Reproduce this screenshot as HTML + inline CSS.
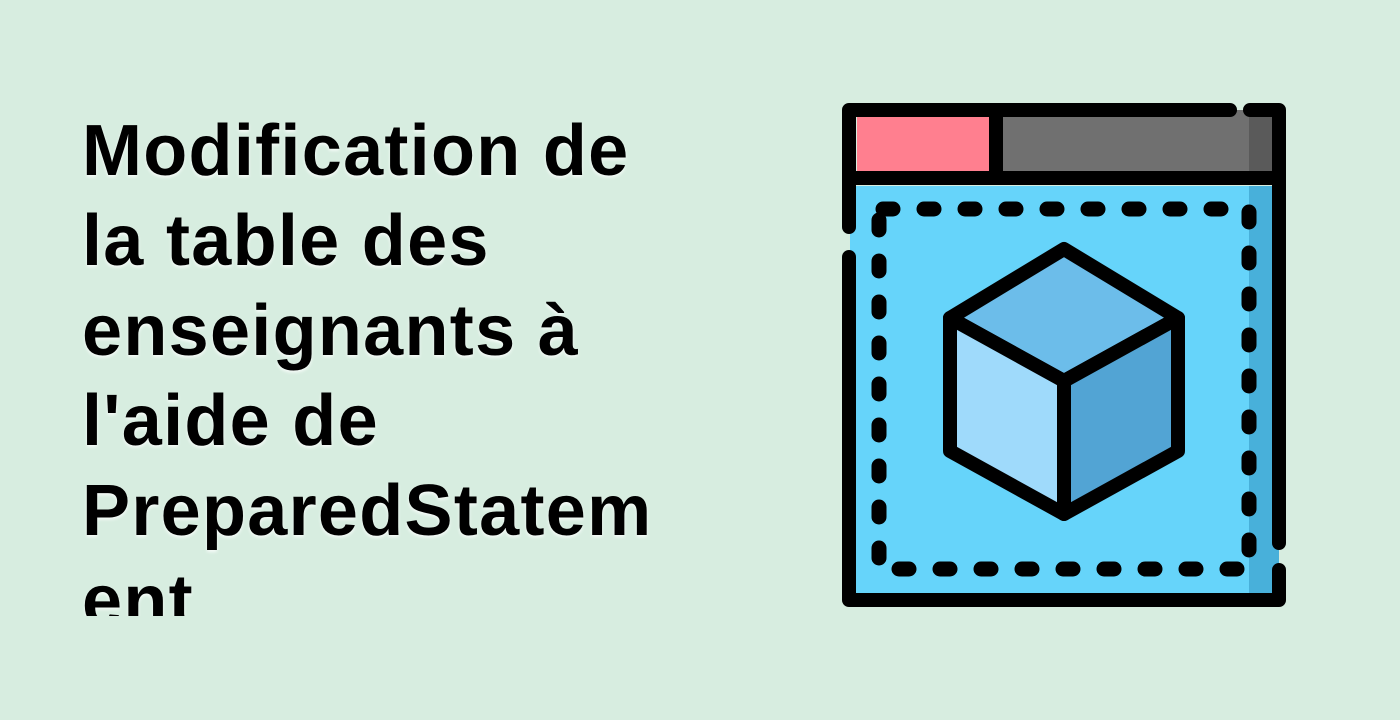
<!DOCTYPE html>
<html><head><meta charset="utf-8"><style>
html,body{margin:0;padding:0}
body{width:1400px;height:720px;background:#d7ede0;position:relative;overflow:hidden}
.t{position:absolute;left:82px;top:106px;width:660px;height:510px;overflow:hidden;font-family:"Liberation Sans",sans-serif;font-weight:bold;font-size:72px;line-height:90px;letter-spacing:1.3px;color:#000;text-shadow:0 2px 3px rgba(255,255,255,.8);white-space:nowrap}
svg{position:absolute;left:0;top:0}
</style></head><body>
<div class="t">Modification de<br>la table des<br>enseignants à<br>l'aide de<br>PreparedStatem<br>ent</div>
<svg width="1400" height="720" viewBox="0 0 1400 720">
<rect x="857" y="110" width="132" height="68" fill="#ff7f8f"/>
<rect x="1003" y="110" width="269" height="68" fill="#707070"/>
<rect x="1249" y="110" width="23" height="68" fill="#5a5a5a"/>
<rect x="850" y="186" width="422" height="407" fill="#66d4fa"/>
<rect x="1249" y="186" width="30" height="407" fill="#48b0da"/>
<g stroke="#000" stroke-width="14" stroke-linecap="round" stroke-linejoin="round" fill="none">
<path d="M849 227 V110 H1230 M1250 110 H1279 V543 M1279 570 V600 H849 V257"/>
<path d="M849 178 H1279 M996 110 V178"/>
</g>
<rect x="879" y="209" width="370" height="360" fill="none" stroke="#000" stroke-width="15" stroke-linecap="round" stroke-dasharray="10 31" stroke-dashoffset="-4"/>
<g stroke="#000" stroke-width="14" stroke-linejoin="round">
<path d="M1064 249 L1178 318 L1064 381 L950 318Z" fill="#6cbdea"/>
<path d="M950 318 L1064 381 V514 L950 451Z" fill="#9fdafb"/>
<path d="M1178 318 L1064 381 V514 L1178 451Z" fill="#52a4d4"/>
</g>
</svg>
</body></html>
